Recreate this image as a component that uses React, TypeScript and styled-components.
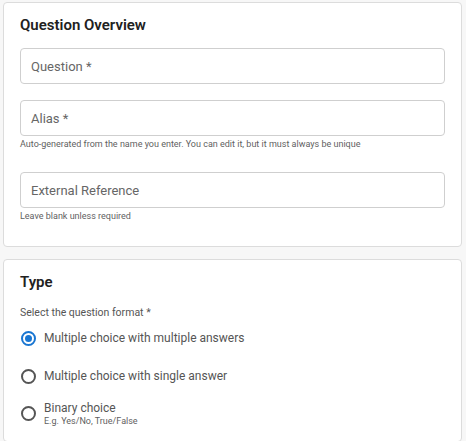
import React from "react";
import styled, { createGlobalStyle } from "styled-components";

const GlobalStyle = createGlobalStyle`
  html, body {
    margin: 0;
    padding: 0;
    background: #f7f7f7;
    font-family: Roboto, "Noto Sans", Arial, sans-serif;
  }
  * { box-sizing: border-box; }
`;

const Page = styled.div`
  display: flex;
  flex-direction: column;
  gap: 12px;
  padding: 2px 4px 3px 3px;
`;

const Card = styled.section<{ $bottom: number }>`
  background: #fff;
  border: 1px solid #dcdcdc;
  border-radius: 4px;
  padding: 13px 16px ${(p) => p.$bottom}px 16px;
`;

const Title = styled.h2`
  margin: 0;
  font-size: 15px;
  font-weight: 600;
  color: #212121;
  line-height: 18px;
`;

const Field = styled.div<{ $gap: number }>`
  margin-top: ${(p) => p.$gap}px;
  display: flex;
  flex-direction: column;
`;

const InputBox = styled.div`
  height: 36px;
  border: 1px solid #cfcfcf;
  border-radius: 4px;
  display: flex;
  align-items: center;
  padding: 0 10px;
  font-size: 13px;
  color: #666;
`;

const Helper = styled.div`
  font-size: 9px;
  color: #5f5f5f;
  margin-top: 2px;
  line-height: 12px;
`;

const Prompt = styled.div`
  margin-top: 15px;
  font-size: 10.5px;
  color: #555;
  line-height: 14px;
`;

const Options = styled.div`
  display: flex;
  flex-direction: column;
`;

const Option = styled.label`
  display: flex;
  align-items: center;
  gap: 8px;
  height: 37.5px;
  cursor: pointer;
`;

const Radio = styled.span<{ $checked?: boolean }>`
  width: 15px;
  height: 15px;
  border-radius: 50%;
  border: 2px solid ${(p) => (p.$checked ? "#1976d2" : "#555")};
  display: flex;
  align-items: center;
  justify-content: center;
  flex: none;
  margin-left: 1px;
  &::after {
    content: "";
    width: 7px;
    height: 7px;
    border-radius: 50%;
    background: ${(p) => (p.$checked ? "#1976d2" : "transparent")};
  }
`;

const OptionText = styled.div`
  display: flex;
  flex-direction: column;
`;

const OptionLabel = styled.span`
  font-size: 12px;
  color: #555;
  line-height: 15px;
`;

const OptionHint = styled.span`
  font-size: 9px;
  color: #5f5f5f;
  line-height: 11px;
`;

const options = [
  { label: "Multiple choice with multiple answers", checked: true },
  { label: "Multiple choice with single answer" },
  { label: "Binary choice", hint: "E.g. Yes/No, True/False" },
];

export default function App() {
  return (
    <>
      <GlobalStyle />
      <Page>
        <Card $bottom={24}>
          <Title>Question Overview</Title>
          <Field $gap={14}>
            <InputBox>Question *</InputBox>
          </Field>
          <Field $gap={16}>
            <InputBox>Alias *</InputBox>
            <Helper>Auto-generated from the name you enter. You can edit it, but it must always be unique</Helper>
          </Field>
          <Field $gap={22}>
            <InputBox>External Reference</InputBox>
            <Helper>Leave blank unless required</Helper>
          </Field>
        </Card>
        <Card $bottom={8}>
          <Title>Type</Title>
          <Prompt>Select the question format *</Prompt>
          <Options>
            {options.map((o) => (
              <Option key={o.label}>
                <Radio $checked={o.checked} />
                <OptionText>
                  <OptionLabel>{o.label}</OptionLabel>
                  {o.hint && <OptionHint>{o.hint}</OptionHint>}
                </OptionText>
              </Option>
            ))}
          </Options>
        </Card>
      </Page>
    </>
  );
}
